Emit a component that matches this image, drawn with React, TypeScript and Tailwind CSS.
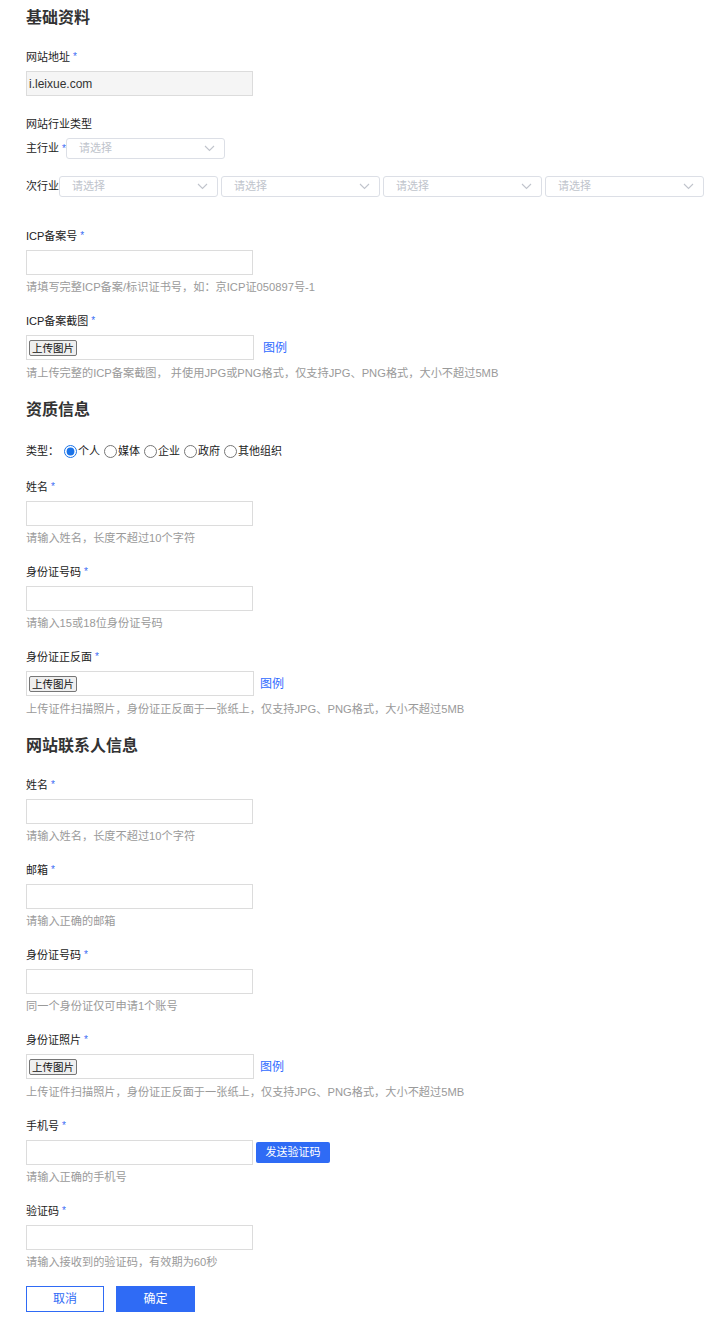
import React from 'react';

const font = '"Liberation Sans", "Noto Sans CJK SC", sans-serif';

const Star = () => <span className="ml-[3px] text-[#3a6cf4] text-[10px] align-top">*</span>;

const Label = ({ text, star = true }: { text: string; star?: boolean }) => (
  <div className="h-4 leading-4 text-[11px] text-[#222]">
    {text}
    {star && <Star />}
  </div>
);

const Hint = ({ text, mt = 'mt-[3px]' }: { text: string; mt?: string }) => (
  <div className={`${mt} h-[18px] leading-[18px] text-[11.2px] text-[#9a9a9a]`}>{text}</div>
);

const Chevron = () => (
  <svg width="11" height="7" viewBox="0 0 11 7" fill="none" stroke="#c0c4cc" strokeWidth="1.1">
    <path d="M1 1l4.5 4.5L10 1" />
  </svg>
);

const Select = () => (
  <div className="w-[159px] h-[21px] border border-[#dcdfe6] rounded-[3px] flex items-center justify-between pl-3 pr-[9px] bg-white">
    <span className="text-[11px] text-[#c0c4cc]">请选择</span>
    <Chevron />
  </div>
);

const TextInput = () => <div className="w-[227px] h-[25px] border border-[#dcdcdc] bg-white" />;

const Upload = ({ linkGap }: { linkGap: string }) => (
  <div className="flex items-center">
    <div className="w-[228px] h-[25px] border border-[#dcdcdc] flex items-center pl-[2px]">
      <div className="h-[16px] px-[2px] border border-[#767676] rounded-[2px] bg-[#efefef] text-[10.5px] leading-[14px] text-[#111]">
        上传图片
      </div>
    </div>
    <a className={`${linkGap} text-[12px] text-[#2f6bff]`}>图例</a>
  </div>
);

const Field = ({ label, hint }: { label: string; hint: string }) => (
  <div className="mb-[17px]">
    <Label text={label} />
    <div className="mt-[6px]">
      <TextInput />
    </div>
    <Hint text={hint} />
  </div>
);

const UploadField = ({ label, hint, linkGap }: { label: string; hint: string; linkGap: string }) => (
  <div>
    <Label text={label} />
    <div className="mt-[6px]">
      <Upload linkGap={linkGap} />
    </div>
    <Hint text={hint} mt="mt-[4px]" />
  </div>
);

const Heading = ({ text }: { text: string }) => (
  <h2 className="h-6 leading-6 text-[16px] font-bold text-[#333]">{text}</h2>
);

const radios = ['个人', '媒体', '企业', '政府', '其他组织'];

export default function App() {
  return (
    <div className="bg-white w-[720px] min-h-[1329px] pl-[26px] pt-[6px]" style={{ fontFamily: font }}>
      <Heading text="基础资料" />

      <div className="mt-[19px]">
        <Label text="网站地址" />
        <div className="mt-[6px] w-[227px] h-[25px] border border-[#dcdcdc] bg-[#f5f5f5] flex items-center pl-[2px] text-[12px] text-[#333]">
          i.leixue.com
        </div>
      </div>

      <div className="mt-[20px]">
        <Label text="网站行业类型" star={false} />
        <div className="mt-[6px] flex items-center">
          <span className="text-[11px] text-[#222]">主行业</span>
          <Star />
          <div>
            <Select />
          </div>
        </div>
        <div className="mt-[17px] flex items-center">
          <span className="text-[11px] text-[#222]">次行业</span>
          <div className="flex gap-[3px]">
            <Select />
            <Select />
            <Select />
            <Select />
          </div>
        </div>
      </div>

      <div className="mt-[31px]">
        <Field label="ICP备案号" hint="请填写完整ICP备案/标识证书号，如：京ICP证050897号-1" />
        <UploadField
          label="ICP备案截图"
          linkGap="ml-[9px]"
          hint="请上传完整的ICP备案截图， 并使用JPG或PNG格式，仅支持JPG、PNG格式，大小不超过5MB"
        />
      </div>

      <div className="mt-[16px]">
        <Heading text="资质信息" />
      </div>

      <div className="mt-[21px] h-4 flex items-center text-[11px] text-[#222]">
        <span>类型：</span>
        <div className="ml-[5px] flex items-center">
          {radios.map((r, i) => (
            <label key={r} className="flex items-center mr-[4px]">
              <input
                type="radio"
                name="type"
                defaultChecked={i === 0}
                className="w-[13px] h-[13px] m-0 mr-[1px] accent-[#1a73e8]"
              />
              <span>{r}</span>
            </label>
          ))}
        </div>
      </div>

      <div className="mt-[20px]">
        <Field label="姓名" hint="请输入姓名，长度不超过10个字符" />
        <Field label="身份证号码" hint="请输入15或18位身份证号码" />
        <UploadField
          label="身份证正反面"
          linkGap="ml-[6px]"
          hint="上传证件扫描照片，身份证正反面于一张纸上，仅支持JPG、PNG格式，大小不超过5MB"
        />
      </div>

      <div className="mt-[16px]">
        <Heading text="网站联系人信息" />
      </div>

      <div className="mt-[19px]">
        <Field label="姓名" hint="请输入姓名，长度不超过10个字符" />
        <Field label="邮箱" hint="请输入正确的邮箱" />
        <Field label="身份证号码" hint="同一个身份证仅可申请1个账号" />
        <div className="mb-[17px]">
          <UploadField
            label="身份证照片"
            linkGap="ml-[6px]"
            hint="上传证件扫描照片，身份证正反面于一张纸上，仅支持JPG、PNG格式，大小不超过5MB"
          />
        </div>
        <div className="mb-[17px]">
          <Label text="手机号" />
          <div className="mt-[6px] flex items-center">
            <TextInput />
            <button className="ml-[3px] w-[74px] h-[21px] rounded-[2px] bg-[#2f6bf5] text-white text-[11px]">
              发送验证码
            </button>
          </div>
          <Hint text="请输入正确的手机号" />
        </div>
        <Field label="验证码" hint="请输入接收到的验证码，有效期为60秒" />
      </div>

      <div className="-mt-[2px] flex gap-3">
        <button className="w-[78px] h-[26px] border border-[#2f6bf5] bg-white text-[#2f6bf5] text-[12px]">取消</button>
        <button className="w-[79px] h-[26px] bg-[#2f6bf5] text-white text-[12px]">确定</button>
      </div>
    </div>
  );
}
